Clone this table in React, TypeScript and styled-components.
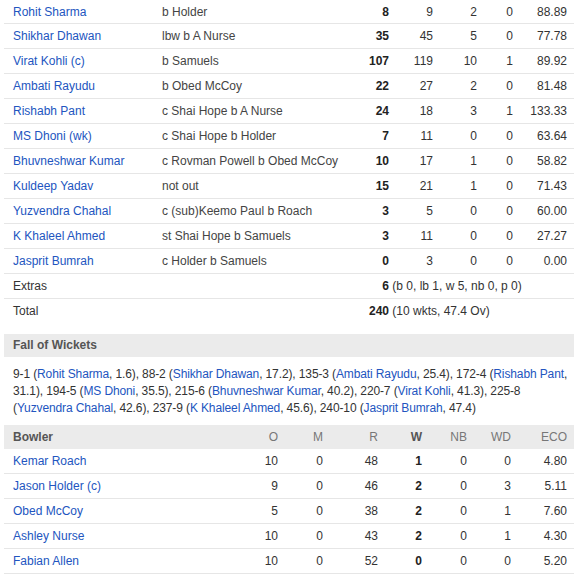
import React from "react"
import styled, { createGlobalStyle } from "styled-components"

const GlobalStyle = createGlobalStyle`
  html, body {
    margin: 0;
    padding: 0;
    background: #fff;
  }
  body {
    font: 12px "Liberation Sans", Arial, sans-serif;
    color: #333;
  }
`

const batting = [
  { name: 'Rohit Sharma', how: 'b Holder', r: 8, b: 9, f: 2, s: 0, sr: '88.89' },
  { name: 'Shikhar Dhawan', how: 'lbw b A Nurse', r: 35, b: 45, f: 5, s: 0, sr: '77.78' },
  { name: 'Virat Kohli (c)', how: 'b Samuels', r: 107, b: 119, f: 10, s: 1, sr: '89.92' },
  { name: 'Ambati Rayudu', how: 'b Obed McCoy', r: 22, b: 27, f: 2, s: 0, sr: '81.48' },
  { name: 'Rishabh Pant', how: 'c Shai Hope b A Nurse', r: 24, b: 18, f: 3, s: 1, sr: '133.33' },
  { name: 'MS Dhoni (wk)', how: 'c Shai Hope b Holder', r: 7, b: 11, f: 0, s: 0, sr: '63.64' },
  { name: 'Bhuvneshwar Kumar', how: 'c Rovman Powell b Obed McCoy', r: 10, b: 17, f: 1, s: 0, sr: '58.82' },
  { name: 'Kuldeep Yadav', how: 'not out', r: 15, b: 21, f: 1, s: 0, sr: '71.43' },
  { name: 'Yuzvendra Chahal', how: 'c (sub)Keemo Paul b Roach', r: 3, b: 5, f: 0, s: 0, sr: '60.00' },
  { name: 'K Khaleel Ahmed', how: 'st Shai Hope b Samuels', r: 3, b: 11, f: 0, s: 0, sr: '27.27' },
  { name: 'Jasprit Bumrah', how: 'c Holder b Samuels', r: 0, b: 3, f: 0, s: 0, sr: '0.00' },
]

const bowling = [
  { name: 'Kemar Roach', o: 10, m: 0, r: 48, w: 1, nb: 0, wd: 0, eco: '4.80' },
  { name: 'Jason Holder (c)', o: 9, m: 0, r: 46, w: 2, nb: 0, wd: 3, eco: '5.11' },
  { name: 'Obed McCoy', o: 5, m: 0, r: 38, w: 2, nb: 0, wd: 1, eco: '7.60' },
  { name: 'Ashley Nurse', o: 10, m: 0, r: 43, w: 2, nb: 0, wd: 1, eco: '4.30' },
  { name: 'Fabian Allen', o: 10, m: 0, r: 52, w: 0, nb: 0, wd: 0, eco: '5.20' },
]

const wickets = [
  ['9-1', 'Rohit Sharma', '1.6'],
  ['88-2', 'Shikhar Dhawan', '17.2'],
  ['135-3', 'Ambati Rayudu', '25.4'],
  ['172-4', 'Rishabh Pant', '31.1'],
  ['194-5', 'MS Dhoni', '35.5'],
  ['215-6', 'Bhuvneshwar Kumar', '40.2'],
  ['220-7', 'Virat Kohli', '41.3'],
  ['225-8', 'Yuzvendra Chahal', '42.6'],
  ['237-9', 'K Khaleel Ahmed', '45.6'],
  ['240-10', 'Jasprit Bumrah', '47.4'],
]

const App: React.FC = () => {
  return <Page>
    <GlobalStyle />
    <Batting>
      {batting.map((p) => <BatRow key={p.name}>
        <PlayerLink>{p.name}</PlayerLink>
        <Dismissal>{p.how}</Dismissal>
        <Num $bold>{p.r}</Num>
        <Num>{p.b}</Num>
        <Num>{p.f}</Num>
        <Num>{p.s}</Num>
        <Num>{p.sr}</Num>
      </BatRow>)}
      <BatRow>
        <Label>Extras</Label>
        <Summary><SummaryNum>6</SummaryNum> (b 0, lb 1, w 5, nb 0, p 0)</Summary>
      </BatRow>
      <BatRow $last>
        <Label>Total</Label>
        <Summary><SummaryNum>240</SummaryNum> (10 wkts, 47.4 Ov)</Summary>
      </BatRow>
    </Batting>

    <SectionHeader>Fall of Wickets</SectionHeader>
    <Wickets>
      {wickets.map(([score, name, over], i) => <React.Fragment key={score}>
        {score} (<PlayerLink>{name}</PlayerLink>, {over}){i < wickets.length - 1 ? ', ' : ''}
      </React.Fragment>)}
    </Wickets>

    <Bowling>
      <BowlHead>
        <HeadCell $bold $left>Bowler</HeadCell>
        <HeadCell>O</HeadCell>
        <HeadCell>M</HeadCell>
        <HeadCell>R</HeadCell>
        <HeadCell $bold>W</HeadCell>
        <HeadCell>NB</HeadCell>
        <HeadCell>WD</HeadCell>
        <HeadCell>ECO</HeadCell>
      </BowlHead>
      {bowling.map((b) => <BowlRow key={b.name}>
        <PlayerLink>{b.name}</PlayerLink>
        <Num>{b.o}</Num>
        <Num>{b.m}</Num>
        <Num>{b.r}</Num>
        <Num $bold>{b.w}</Num>
        <Num>{b.nb}</Num>
        <Num>{b.wd}</Num>
        <Num>{b.eco}</Num>
      </BowlRow>)}
    </Bowling>
  </Page>
}

const Page = styled.div`
  margin: 0 0 0 4px;
  width: 570px;
`

const Batting = styled.div`
  display: flex;
  flex-direction: column;
`

const BatRow = styled.div<{ $last?: boolean }>`
  display: grid;
  grid-template-columns: 149px 1fr 40px 44px 44px 36px 54px;
  align-items: center;
  height: 24px;
  padding: 0 7px 0 9px;
  border-bottom: 1px solid ${(p) => (p.$last ? 'transparent' : '#e6e6e6')};
  white-space: nowrap;
  &:first-child {
    height: 23px;
  }
`

const PlayerLink = styled.a`
  color: #2255c0;
  text-decoration: none;
  cursor: pointer;
`

const Dismissal = styled.span`
  color: #444;
`

const Num = styled.span<{ $bold?: boolean }>`
  text-align: right;
  color: ${(p) => (p.$bold ? '#222' : '#333')};
  font-weight: ${(p) => (p.$bold ? 700 : 400)};
`

const Label = styled.span`
  grid-column: 1 / 3;
  color: #333;
`

const Summary = styled.span`
  grid-column: 3 / -1;
  color: #333;
`

const SummaryNum = styled.b`
  display: inline-block;
  width: 40px;
  text-align: right;
  color: #222;
`

const SectionHeader = styled.div`
  margin-top: 10px;
  height: 23px;
  line-height: 23px;
  padding-left: 9px;
  background: #ebebeb;
  color: #555;
  font-weight: 700;
`

const Wickets = styled.p`
  margin: 0;
  padding: 9px 4px 8px 9px;
  line-height: 17px;
  letter-spacing: -0.12px;
  color: #333;
`

const Bowling = styled.div`
  display: flex;
  flex-direction: column;
`

const bowlCols = '225px 40px 45px 55px 44px 45px 44px 56px'

const BowlHead = styled.div`
  display: grid;
  grid-template-columns: ${bowlCols};
  align-items: center;
  height: 24px;
  padding: 0 7px 0 9px;
  background: #ebebeb;
`

const HeadCell = styled.span<{ $bold?: boolean; $left?: boolean }>`
  text-align: ${(p) => (p.$left ? 'left' : 'right')};
  color: ${(p) => (p.$bold ? '#555' : '#777')};
  font-weight: ${(p) => (p.$bold ? 700 : 400)};
`

const BowlRow = styled.div`
  display: grid;
  grid-template-columns: ${bowlCols};
  align-items: center;
  height: 24px;
  padding: 0 7px 0 9px;
  border-bottom: 1px solid #e6e6e6;
`

export default App
